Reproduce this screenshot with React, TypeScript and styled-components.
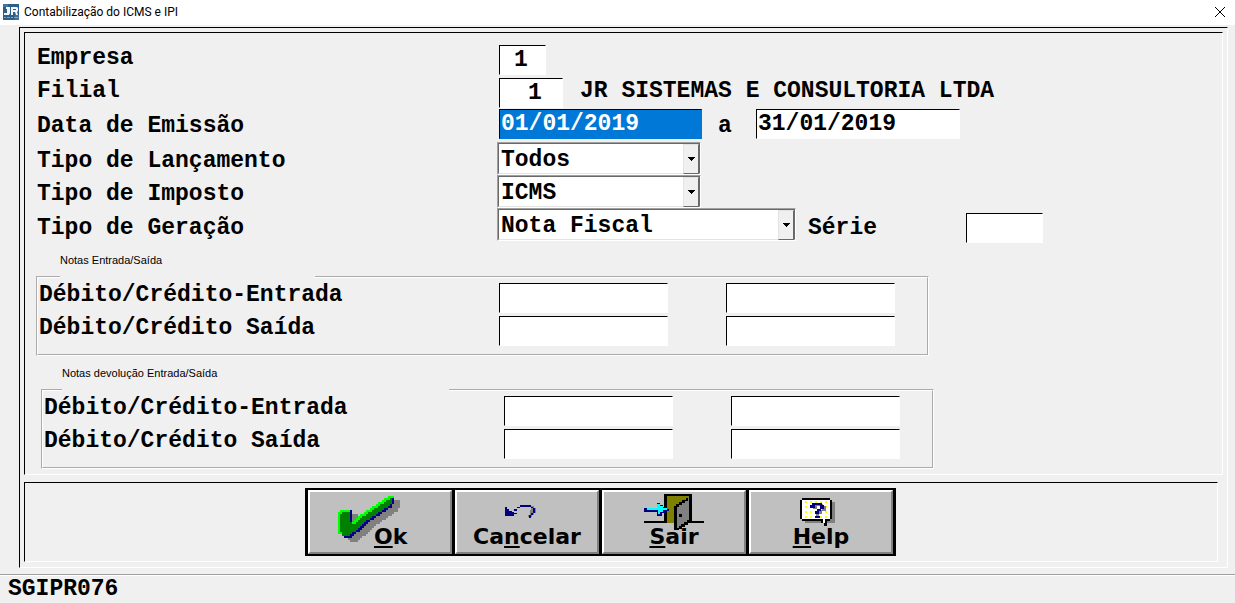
import React from "react";
import styled, { createGlobalStyle, css } from "styled-components";

const Global = createGlobalStyle`
  *, *::before, *::after { box-sizing: border-box; }
  body { margin: 0; background: #f0f0f0; }
`;

const mono = css`
  font-family: "Liberation Mono", "Courier New", monospace;
  font-size: 23px;
  font-weight: 700;
  line-height: 26px;
  color: #000;
`;

const Window = styled.div`
  display: flex;
  flex-direction: column;
  min-height: 100vh;
  background: #f0f0f0;
`;

const TitleBar = styled.header`
  display: flex;
  align-items: center;
  gap: 5px;
  height: 25px;
  padding: 0 8px 1px 3px;
  background: #fff;
`;

const Title = styled.h1`
  flex: 1;
  margin: 0;
  font: 400 12px/16px Roboto, "Noto Sans", sans-serif;
  color: #000;
`;

const CloseButton = styled.button`
  display: flex;
  padding: 0;
  border: 0;
  background: none;
`;

const Sunken = styled.div`
  border: 1px solid;
  border-color: #000 #fff #fff #000;
`;

const Frame = styled(Sunken)`
  flex: 1;
  margin: 2px 7px 6px 19px;
  padding: 4px;
`;

const FormPanel = styled(Sunken).attrs({ as: "main" })`
  padding: 10px 0 5px 11px;
`;

const ActionPanel = styled(Sunken)`
  display: flex;
  margin: 7px 5px 0 0;
  padding: 5px 0 5px 280px;
`;

const Row = styled.div<{ $top?: number }>`
  display: flex;
  align-items: flex-start;
  height: 33px;
  padding-top: ${(p) => p.$top ?? 0}px;
`;

const Label = styled.label<{ $drop?: number; $width?: number }>`
  ${mono}
  flex: none;
  width: ${(p) => (p.$width ? `${p.$width}px` : "auto")};
  padding: ${(p) => p.$drop ?? 0}px 0 0 1px;
  white-space: nowrap;
`;

const SerieLabel = styled(Label)`
  margin-left: 11px;
`;

const Between = styled.span`
  ${mono}
  width: 54px;
  padding: 4px 0 0 16px;
`;

const Company = styled.output`
  ${mono}
  margin-left: 17px;
  white-space: nowrap;
`;

const Field = styled.input<{ $width: number }>`
  ${mono}
  width: ${(p) => p.$width}px;
  height: 30px;
  padding: 1px 1px 2px;
  border: 1px solid;
  border-color: #000 #fff #fff #000;
  border-radius: 0;
  outline: 0;
  background: #fff;
`;

const CodeField = styled(Field)`
  padding-left: 14px;
`;

const BranchField = styled(Field)`
  padding-left: 28px;
`;

const SelectedField = styled(Field)`
  border-color: #000 #0078d7 #0078d7 #000;
  background: #0078d7;
  color: #fff;
`;

const SerieField = styled(Field)`
  margin-top: 5px;
`;

const SelectBox = styled.span<{ $width: number }>`
  display: flex;
  width: ${(p) => p.$width}px;
  height: 33px;
  margin-left: -2px;
  border: 1px solid;
  border-color: #a0a0a0 #fff #fff #a0a0a0;
  position: relative;
`;

const Select = styled.select`
  ${mono}
  appearance: none;
  width: 100%;
  padding: 3px 18px 1px 2px;
  border: 1px solid;
  border-color: #696969 #696969 #e3e3e3 #696969;
  border-radius: 0;
  outline: 0;
  background: #fff;
`;

const Arrow = styled.span`
  position: absolute;
  top: 1px;
  right: 1px;
  bottom: 0;
  display: flex;
  align-items: center;
  justify-content: center;
  width: 16px;
  border: 1px solid;
  border-color: #e3e3e3 #696969 #696969 #e3e3e3;
  background: #f0f0f0;
  pointer-events: none;
`;

const Group = styled.fieldset<{ $indent?: number; $top: number }>`
  width: 893px;
  min-width: 0;
  height: 103px;
  margin: ${(p) => p.$top}px 0 0 ${(p) => p.$indent ?? 0}px;
  padding: 0;
  border: 2px groove #fff;
`;

const Legend = styled.legend<{ $width: number; $left: number }>`
  width: ${(p) => p.$width}px;
  height: 48px;
  margin: 0 0 0 ${(p) => p.$left}px;
  padding: 0;
  font: 400 11px/14px "Liberation Sans", Arial, sans-serif;
  color: #000;
`;

const GroupRows = styled.div`
  margin-top: -19px;
`;

const GroupField = styled(Field)`
  margin: 1px 58px 0 0;
`;

const ButtonBar = styled.div`
  display: flex;
  gap: 3px;
  padding: 2px 3px;
  background: #000;
`;

const Button = styled.button`
  display: flex;
  flex-direction: column;
  align-items: center;
  justify-content: flex-end;
  width: 144px;
  height: 64px;
  padding: 0 0 3px;
  border: 2px solid;
  border-color: #fff #808080 #808080 #fff;
  border-radius: 0;
  background: #c0c0c0;
  font: 700 22px/24px "DejaVu Sans", Verdana, sans-serif;
  color: #000;
`;

const OkButton = styled(Button)`
  flex-direction: row;
  align-items: flex-end;
  justify-content: flex-start;
  padding-left: 28px;

  svg {
    margin: 0 -26px 7px 0;
  }
`;

const CancelButton = styled(Button)`
  svg {
    margin-bottom: 7px;
  }
`;

const ExitButton = styled(Button)`
  svg {
    margin-bottom: -5px;
  }
`;

const HelpButton = styled(Button)`
  svg {
    margin-bottom: -3px;
  }
`;

const Caption = styled.span`
  position: relative;
`;

const Hot = styled.span`
  text-decoration: underline;
  text-decoration-thickness: 2px;
  text-underline-offset: 2px;
  text-decoration-skip-ink: none;
`;

const StatusBar = styled.footer`
  ${mono}
  height: 29px;
  padding: 1px 0 0 8px;
  border-top: 1px solid #a0a0a0;
  box-shadow: inset 0 1px #fff;
`;

const LogoIcon = () => (
  <svg width="16" height="16" viewBox="0 0 16 16" aria-hidden="true">
    <rect width="16" height="16" fill="#2c6088" />
    <path d="M0 0h5v3H0zM12 11h4v5h-4z" fill="#437597" />
    <path d="M3 3h4v6l-1 2H1V9h3V5H3z" fill="#f2f6f9" />
    <path fillRule="evenodd" d="M8 3h6l1 1v3l-1 1 1 3h-2l-1-3h-2v3H8zM10 5v1h3V5z" fill="#f2f6f9" />
    <path d="M1 13h2v1H1zM4 13h3v1H4zM8 13h2v1H8zM11 13h4v1h-4z" fill="#7fa2b9" />
  </svg>
);

const CloseIcon = () => (
  <svg width="14" height="12" viewBox="0 0 14 12" aria-hidden="true">
    <path d="M2 1l10 10M12 1L2 11" stroke="#000" fill="none" />
  </svg>
);

const ArrowIcon = () => (
  <svg width="7" height="4" viewBox="0 0 7 4" shapeRendering="crispEdges" aria-hidden="true">
    <path d="M0 0h7v1H6v1H5v1H4v1H3V3H2V2H1V1H0z" />
  </svg>
);

// Each run: row, start, end of light green, end of dark green, end of navy.
const checkRuns = [
  [0, 25, 28, 28, 28],
  [1, 23, 26, 27, 28],
  [2, 22, 24, 27, 28],
  [3, 20, 23, 27, 28],
  [4, 19, 21, 26, 27],
  [5, 17, 20, 25, 27],
  [6, 16, 18, 23, 25],
  [7, 14, 17, 22, 24],
  [7, 1, 6, 6, 7],
  [8, 13, 15, 20, 22],
  [8, 0, 2, 6, 7],
  [9, 11, 14, 19, 21],
  [9, 0, 1, 6, 7],
  [10, 10, 12, 17, 19],
  [10, 0, 1, 6, 7],
  [11, 9, 11, 16, 18],
  [11, 0, 1, 6, 7],
  [12, 8, 10, 14, 16],
  [12, 0, 1, 6, 7],
  [13, 0, 1, 7, 7],
  [13, 7, 9, 13, 15],
  [14, 0, 1, 12, 14],
  [15, 0, 1, 11, 13],
  [16, 0, 1, 10, 12],
  [17, 0, 1, 9, 11],
  [18, 0, 2, 7, 9],
  [19, 2, 2, 6, 8],
  [20, 3, 3, 3, 7],
];

const runsPath = (from: number, to: number, dx = 0, dy = 0) =>
  checkRuns
    .map((r) => `M${r[from] + dx} ${r[0] + dy}H${r[to] + dx}v1H${r[from] + dx}z`)
    .join("");

const CheckIcon = () => (
  <svg width="62" height="46" viewBox="0 0 31 23" shapeRendering="crispEdges" aria-hidden="true">
    <path d={runsPath(1, 4, 3, 2)} fill="#808080" />
    <path d={runsPath(1, 2)} fill="#00ff00" />
    <path d={runsPath(2, 3)} fill="#008000" />
    <path d={runsPath(3, 4)} fill="#000080" />
  </svg>
);

const UndoIcon = () => (
  <svg width="44" height="13" viewBox="0 0 44 13" shapeRendering="crispEdges" aria-hidden="true">
    <path d="M26 1h3v2h2v5h-2v2h-2v2h-4v-2h2z" fill="#808080" />
    <path
      d="M0 2h2v2h2v2h3v1h2V4h3V2h3V0h11v2h2v1h2v5h-2v2h-2v3h-2v-3h2V8h2V3h-2V2H15v1h-3v3H9v2h3v1H9v2H0z"
      fill="#000080"
    />
  </svg>
);

const DoorIcon = () => (
  <svg width="60" height="36" viewBox="0 0 60 36" shapeRendering="crispEdges" aria-hidden="true">
    <path d="M0 27h60v2H0z" />
    <path d="M20 0h28v29H20z" />
    <path d="M23 2h22v27H23z" fill="#808000" />
    <path d="M30 12h2v-2h3V8h3V6h4V4h3V2h1v27h-2v2h-3v2h-3v2h-3v1h-5z" />
    <path d="M33 13h2v-2h3V9h3V7h3V4h1v22h-2v2h-3v2h-3v2h-2v2h-2z" fill="#808080" />
    <path d="M35 20h3v3h-3z" />
    <path d="M0 14h13V9h3v2h3v2h3v2h3v2h-3v2h-4v3h-5v-4H0z" fill="#000080" />
    <path d="M3 14h10v-4h3v2h3v2h4v2h-4v2h-3v2h-2v-4H3z" fill="#00ffff" />
  </svg>
);

const HelpIcon = () => (
  <svg width="42" height="30" viewBox="0 0 42 30" shapeRendering="crispEdges" aria-hidden="true">
    <path d="M5 4h30v21H5z" fill="#808080" />
    <path d="M2 0h28v2h2v19h-2v2h-3v5h-3v-3h-3v-2H2v-2H0V2h2z" />
    <path d="M2 2h28v19h-5v4h-2v-4H2z" fill="#fff" />
    <path
      d="M6 3v18M11 3v18M16 3v18M21 3v18M26 3v18"
      stroke="#ff0"
      strokeWidth="2"
      strokeDasharray="2 3"
    />
    <path d="M12 6h11v2h3v5h-4v3h-3v2h-3v-3h3v-3h3V8h-5v3h-4z" fill="#808080" />
    <path d="M12 5h10v2h2v4h-3v2h-2v3h-4v-3h2v-2h3V7h-5v3h-5V7h2zM15 18h5v2h-5z" fill="#000080" />
  </svg>
);

const Combo = ({ id, value, width }: { id: string; value: string; width: number }) => (
  <SelectBox $width={width}>
    <Select id={id} defaultValue={value}>
      <option>{value}</option>
    </Select>
    <Arrow>
      <ArrowIcon />
    </Arrow>
  </SelectBox>
);

const EntryRow = ({ id, label }: { id: string; label: string }) => (
  <Row>
    <Label htmlFor={id} $width={461}>
      {label}
    </Label>
    <GroupField id={id} $width={169} />
    <GroupField $width={169} aria-label={`${label} (crédito)`} />
  </Row>
);

export default function App() {
  return (
    <Window>
      <Global />
      <TitleBar>
        <LogoIcon />
        <Title>Contabilização do ICMS e IPI</Title>
        <CloseButton aria-label="Fechar">
          <CloseIcon />
        </CloseButton>
      </TitleBar>
      <Frame>
        <FormPanel>
          <Row $top={2}>
            <Label htmlFor="empresa" $width={463}>Empresa</Label>
            <CodeField id="empresa" $width={47} defaultValue="1" />
          </Row>
          <Row $top={2}>
            <Label htmlFor="filial" $width={463}>Filial</Label>
            <BranchField id="filial" $width={64} defaultValue="1" />
            <Company htmlFor="filial">JR SISTEMAS E CONSULTORIA LTDA</Company>
          </Row>
          <Row>
            <Label htmlFor="inicio" $width={463} $drop={4}>Data de Emissão</Label>
            <SelectedField id="inicio" $width={203} defaultValue="01/01/2019" />
            <Between>a</Between>
            <Field id="fim" aria-label="Data final" $width={204} defaultValue="31/01/2019" />
          </Row>
          <Row>
            <Label htmlFor="lancamento" $width={463} $drop={6}>Tipo de Lançamento</Label>
            <Combo id="lancamento" value="Todos" width={204} />
          </Row>
          <Row>
            <Label htmlFor="imposto" $width={463} $drop={6}>Tipo de Imposto</Label>
            <Combo id="imposto" value="ICMS" width={204} />
          </Row>
          <Row>
            <Label htmlFor="geracao" $width={463} $drop={7}>Tipo de Geração</Label>
            <Combo id="geracao" value="Nota Fiscal" width={299} />
            <SerieLabel htmlFor="serie" $width={159} $drop={7}>Série</SerieLabel>
            <SerieField id="serie" $width={77} />
          </Row>
          <Group $top={12}>
            <Legend $left={22} $width={255}>Notas Entrada/Saída</Legend>
            <GroupRows>
              <EntryRow id="nota-entrada" label="Débito/Crédito-Entrada" />
              <EntryRow id="nota-saida" label="Débito/Crédito Saída" />
            </GroupRows>
          </Group>
          <Group $top={10} $indent={5}>
            <Legend $left={19} $width={387}>Notas devolução Entrada/Saída</Legend>
            <GroupRows>
              <EntryRow id="dev-entrada" label="Débito/Crédito-Entrada" />
              <EntryRow id="dev-saida" label="Débito/Crédito Saída" />
            </GroupRows>
          </Group>
        </FormPanel>
        <ActionPanel>
          <ButtonBar>
            <OkButton>
              <CheckIcon />
              <Caption><Hot>O</Hot>k</Caption>
            </OkButton>
            <CancelButton>
              <UndoIcon />
              <Caption>Ca<Hot>n</Hot>celar</Caption>
            </CancelButton>
            <ExitButton>
              <DoorIcon />
              <Caption><Hot>S</Hot>air</Caption>
            </ExitButton>
            <HelpButton>
              <HelpIcon />
              <Caption><Hot>H</Hot>elp</Caption>
            </HelpButton>
          </ButtonBar>
        </ActionPanel>
      </Frame>
      <StatusBar>SGIPR076</StatusBar>
    </Window>
  );
}
